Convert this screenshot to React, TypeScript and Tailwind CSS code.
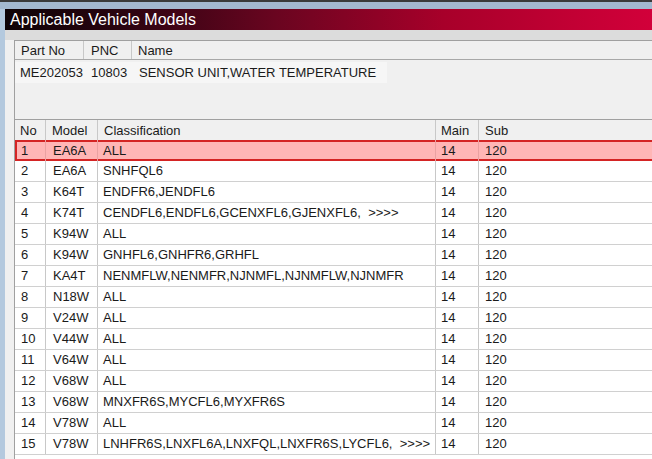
const rows: [string, string, string][] = [
  ["1", "EA6A", "ALL"],
  ["2", "EA6A", "SNHFQL6"],
  ["3", "K64T", "ENDFR6,JENDFL6"],
  ["4", "K74T", "CENDFL6,ENDFL6,GCENXFL6,GJENXFL6,  >>>>"],
  ["5", "K94W", "ALL"],
  ["6", "K94W", "GNHFL6,GNHFR6,GRHFL"],
  ["7", "KA4T", "NENMFLW,NENMFR,NJNMFL,NJNMFLW,NJNMFR"],
  ["8", "N18W", "ALL"],
  ["9", "V24W", "ALL"],
  ["10", "V44W", "ALL"],
  ["11", "V64W", "ALL"],
  ["12", "V68W", "ALL"],
  ["13", "V68W", "MNXFR6S,MYCFL6,MYXFR6S"],
  ["14", "V78W", "ALL"],
  ["15", "V78W", "LNHFR6S,LNXFL6A,LNXFQL,LNXFR6S,LYCFL6,  >>>>"],
];

const cols = "grid grid-cols-[31px_52px_338px_43px_1fr]";

export default function App() {
  return (
    <div
      className="flex h-[459px] w-[652px] flex-col overflow-hidden bg-[#f0f0f0] text-[13px] text-[#1a1a1a]"
      style={{ fontFamily: '"Liberation Sans", Arial, sans-serif' }}
    >
      {/* window frame top */}
      <div className="h-[2px] shrink-0 bg-[#3a3a3a]" />
      <div className="h-[7px] shrink-0 bg-[#a3b8cf]" />
      <div className="flex min-h-0 flex-1">
        <div className="w-[5px] shrink-0 bg-[#b4c9de]" />
        <div className="flex min-w-0 flex-1 flex-col">
          <div className="flex h-[21px] shrink-0 items-center bg-[linear-gradient(to_right,#0e0306,#2a0410_18%,#6a0520_42%,#a8002a_68%,#d2003a)] pl-[5px] text-[16px] leading-none text-white">
            Applicable Vehicle Models
          </div>
          <div className="h-[10px] shrink-0 bg-[#dcdcdc]" />

          {/* part panel */}
          <div className="ml-[9px] flex h-[79px] shrink-0 flex-col border-t border-l border-[#a0a0a0] bg-[#f0f0f0]">
            <div className="flex h-[19px] border-b border-[#a8a8a8] leading-[19px]">
              <div className="w-[69px] border-r border-[#c8c8c8] pl-[6px]">Part No</div>
              <div className="w-[48px] border-r border-[#c8c8c8] pl-[7px]">PNC</div>
              <div className="pl-[6px]">Name</div>
            </div>
            <div className="mt-[2px] flex w-[372px] bg-[#f6f6f6] py-[2px] leading-[17px]">
              <div className="w-[69px] pl-[5px]">ME202053</div>
              <div className="w-[48px] pl-[7px]">10803</div>
              <div className="pl-[7px]">SENSOR UNIT,WATER TEMPERATURE</div>
            </div>
          </div>

          {/* models table */}
          <div className="ml-[9px] flex min-h-0 flex-1 flex-col border-t border-l border-[#a0a0a0] bg-white">
            <div className={`${cols} h-[20px] shrink-0 bg-[#f0f0f0] leading-[21px]`}>
              <div className="border-r border-[#c8c8c8] pl-[5px]">No</div>
              <div className="border-r border-[#c8c8c8] pl-[6px]">Model</div>
              <div className="border-r border-[#c8c8c8] pl-[6px]">Classification</div>
              <div className="border-r border-[#c8c8c8] pl-[5px]">Main</div>
              <div className="pl-[6px]">Sub</div>
            </div>
            {rows.map(([no, model, cls]) => {
              const sel = no === "1";
              const cell = sel ? "border-r border-[#eaa2a2]" : "border-r border-[#c8c8c8]";
              return (
                <div
                  key={no}
                  className={
                    sel
                      ? `${cols} h-[21px] shrink-0 bg-[#ffb6b6] leading-[21px] shadow-[inset_2px_2px_0_#d42424,inset_0_-2px_0_#d42424]`
                      : `${cols} h-[21px] shrink-0 border-b border-[#d0d0d0] leading-[20px]`
                  }
                >
                  <div className={`${cell} pl-[6px]`}>{no}</div>
                  <div className={`${cell} pl-[7px]`}>{model}</div>
                  <div className={`${cell} whitespace-pre pl-[5px]`}>{cls}</div>
                  <div className={`${cell} pl-[5px]`}>14</div>
                  <div className="pl-[6px]">120</div>
                </div>
              );
            })}
          </div>
        </div>
      </div>
    </div>
  );
}
